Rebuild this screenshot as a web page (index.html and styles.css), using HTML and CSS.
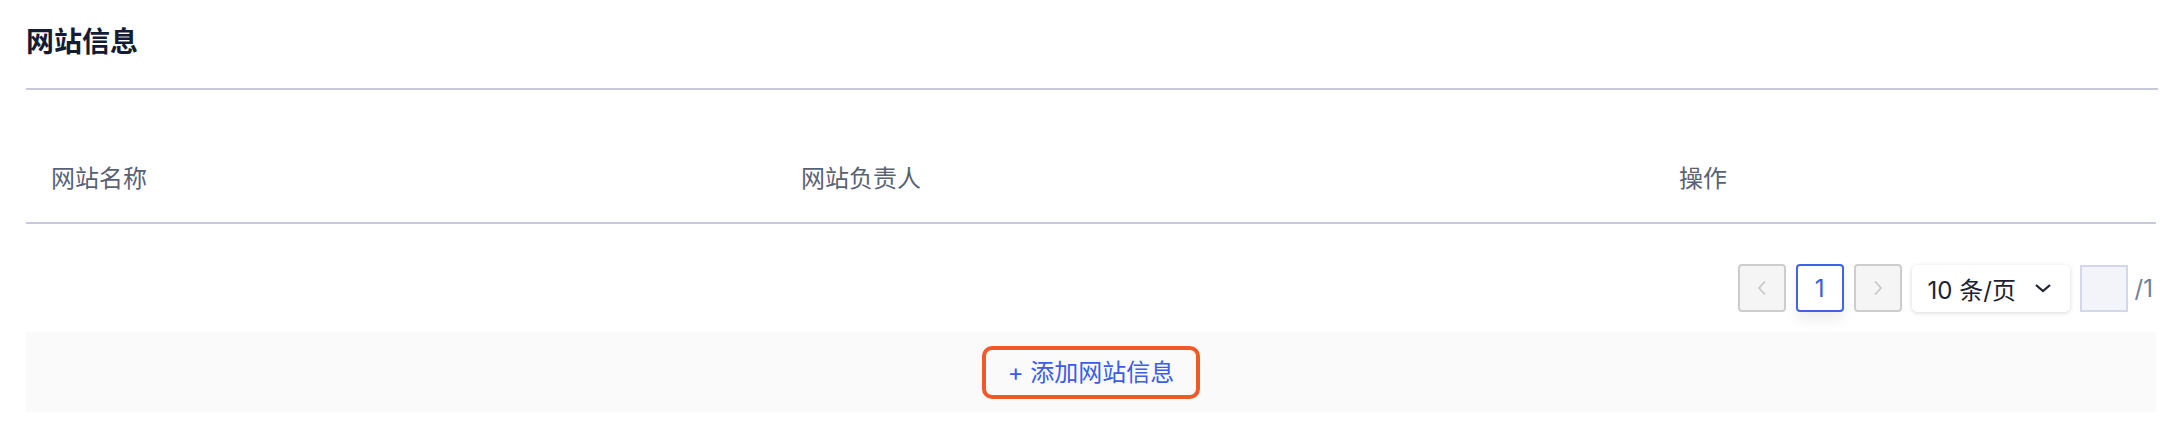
FILE: index.html
```html
<!DOCTYPE html>
<html lang="zh-CN">
<head>
  <meta charset="UTF-8" />
  <meta name="viewport" content="width=device-width, initial-scale=1" />
  <title>网站信息</title>
  <link rel="stylesheet" href="styles.css">
</head>
<body>
  <div class="page">
    <div class="section-header">
      <h2>网站信息</h2>
    </div>

    <div class="site-table">
      <div class="table-head">
        <div class="th">网站名称</div>
        <div class="th">网站负责人</div>
        <div class="th">操作</div>
      </div>
    </div>

    <div class="pager">
      <button class="pager-btn disabled" aria-label="上一页">
        <svg width="12" height="16" viewBox="0 0 12 16"><path d="M9 1.5 L3 8 L9 14.5" fill="none" stroke="#c4c4c4" stroke-width="1.6"/></svg>
      </button>
      <button class="pager-btn active">1</button>
      <button class="pager-btn disabled" aria-label="下一页">
        <svg width="12" height="16" viewBox="0 0 12 16"><path d="M3 1.5 L9 8 L3 14.5" fill="none" stroke="#c4c4c4" stroke-width="1.6"/></svg>
      </button>
      <div class="page-size">
        <span>10 条/页</span>
        <svg width="18" height="10" viewBox="0 0 18 10"><path d="M2 2 L9 8 L16 2" fill="none" stroke="#1c2233" stroke-width="2.2"/></svg>
      </div>
      <input class="jump-input" type="text" />
      <span class="total">/1</span>
    </div>

    <div class="add-bar">
      <button class="add-btn">+ 添加网站信息</button>
    </div>
  </div>
</body>
</html>
```

FILE: styles.css
```css
body {
  margin: 0;
  background: #ffffff;
  font-family: "Inter", "Noto Sans CJK SC", sans-serif;
}
.page {
  padding: 0 16px 0 26px;
}
.section-header {
  padding-top: 20px;
  padding-bottom: 28px;
  border-bottom: 2px solid #c7c9da;
}
.section-header h2 {
  margin: 0;
  font-size: 28px;
  line-height: 40px;
  font-weight: bold;
  color: #141b34;
  font-family: "Noto Sans CJK SC", sans-serif;
}
.site-table {
  margin-top: 40px;
  margin-right: 2px;
}
.table-head {
  display: grid;
  grid-template-columns: 750px 878px 1fr;
  height: 92px;
  align-items: center;
  border-bottom: 2px solid #c7c9da;
}
.th {
  padding-left: 25px;
  font-size: 24px;
  color: #596275;
  font-family: "Noto Sans CJK SC", sans-serif;
}
.pager {
  margin-top: 40px;
  display: flex;
  justify-content: flex-end;
  align-items: center;
  gap: 10px;
  padding-right: 5px;
}
.pager-btn {
  width: 48px;
  height: 48px;
  box-sizing: border-box;
  border-radius: 4px;
  display: flex;
  align-items: center;
  justify-content: center;
  padding: 0;
  font-family: "Inter", sans-serif;
  font-size: 24px;
}
.pager-btn.disabled {
  background: #f5f5f5;
  border: 2px solid #cdcdcd;
}
.pager-btn.active {
  background: #ffffff;
  border: 2px solid #3f63e8;
  color: #3a5ce6;
  box-shadow: 0 8px 14px rgba(0, 0, 0, 0.07);
}
.page-size {
  width: 158px;
  height: 47px;
  box-sizing: border-box;
  display: flex;
  align-items: center;
  justify-content: space-between;
  padding: 0 18px 0 16px;
  background: #ffffff;
  border-radius: 5px;
  box-shadow: 0 1px 4px rgba(0, 0, 0, 0.16);
  font-size: 24px;
  color: #1c2233;
}
.jump-input {
  width: 48px;
  height: 47px;
  box-sizing: border-box;
  background: #f3f4fa;
  border: 2px solid #d4d7ea;
  border-radius: 0;
  padding: 0;
}
.total {
  margin-left: -3px;
  font-size: 24px;
  color: #737d93;
}
.add-bar {
  margin-top: 20px;
  margin-right: 2px;
  height: 80px;
  background: #fafafa;
  display: flex;
  align-items: center;
  justify-content: center;
}
.add-btn {
  padding: 6px 22px;
  border: 4px solid #f05a2a;
  border-radius: 10px;
  background: transparent;
  color: #3b5de7;
  font-size: 24px;
  line-height: 33px;
  font-family: "Inter", "Noto Sans CJK SC", sans-serif;
}
```
